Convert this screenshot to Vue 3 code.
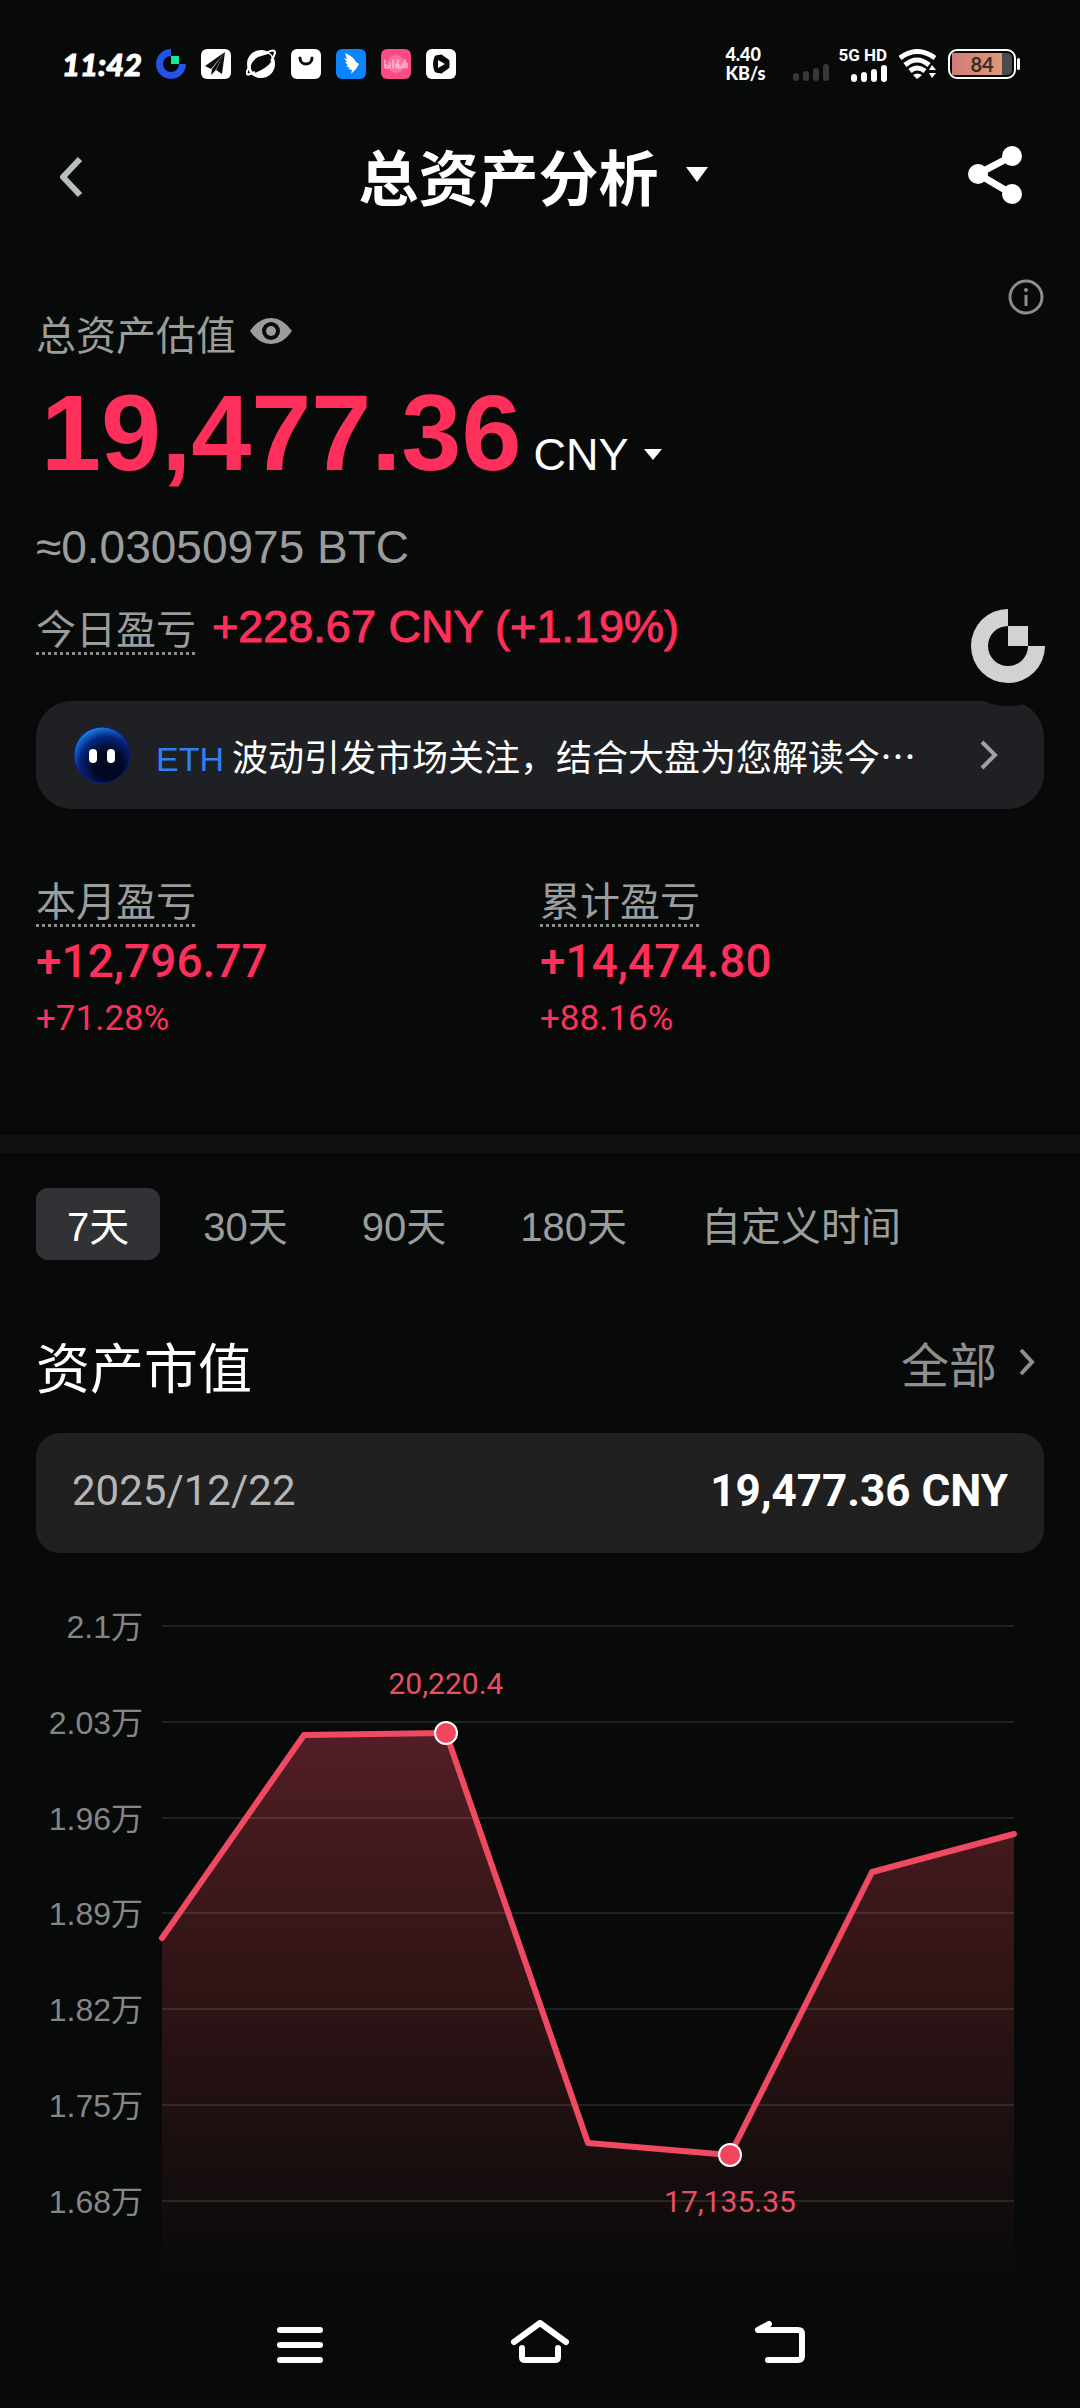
<script setup>
import { ref } from 'vue'

const ranges = ['7天', '30天', '90天', '180天', '自定义时间']
const activeRange = ref('7天')

const stats = [
  { label: '本月盈亏', value: '+12,796.77', percent: '+71.28%' },
  { label: '累计盈亏', value: '+14,474.80', percent: '+88.16%' },
]

const ticks = ['2.1万', '2.03万', '1.96万', '1.89万', '1.82万', '1.75万', '1.68万'].map(
  (label, i) => ({ label, y: Math.round(33 + i * 95.8) }),
)

const points = [
  [162, 345],
  [304, 142],
  [446, 140],
  [588, 550],
  [730, 562],
  [872, 279],
  [1014, 241],
]
const linePoints = points.map((p) => p.join(',')).join(' ')
const areaPoints = `162,680 ${linePoints} 1014,680`
const markers = [
  { x: 446, y: 140, label: '20,220.4', labelY: 101 },
  { x: 730, y: 562, label: '17,135.35', labelY: 619 },
]
</script>

<template>
  <div class="page">
    <div class="status">
      <div class="status-left">
        <span class="clock">11:42</span>
        <svg class="app" viewBox="0 0 30 30">
          <path d="M15 0A15 15 0 1 0 30 15H23A8 8 0 1 1 15 7Z" fill="#2354e6" />
          <rect x="15" y="7" width="8" height="8" fill="#17e6a1" />
        </svg>
        <svg class="app" viewBox="0 0 30 30">
          <rect width="30" height="30" rx="6" fill="#fff" />
          <path d="M24 3L4 17l6 3zM24 3L11 20l-1 6 4-4zM24 3l-9 18 6 4z" fill="#0a0c0b" />
        </svg>
        <svg class="app" viewBox="0 0 30 30">
          <circle cx="15" cy="15" r="14" fill="#fff" />
          <path d="M5 16Q6 12 12 8L22 5Q27 6 25 13Q21 19 9 24Q4 22 5 16Z" fill="#070a09" />
          <path d="M4 17C0 22-1 27 4 25Q7 24 9 23M20 4Q29-1 29 4Q28 8 25 12" fill="none" stroke="#fff" stroke-width="2" />
        </svg>
        <svg class="app" viewBox="0 0 30 30">
          <rect width="30" height="30" rx="6" fill="#fff" />
          <path d="M9 9C9 17 21 17 21 9" fill="none" stroke="#0a0c0b" stroke-width="3" stroke-linecap="round" />
        </svg>
        <svg class="app" viewBox="0 0 30 30">
          <rect width="30" height="30" rx="6" fill="#0a84ff" />
          <path d="M9 4c5 2 9 5 11 9l3 2-3 5-1 1-4 4 1-4-4-1 2-1-4-2 2-1-3-3h2l-3-4 3 1z" fill="#fff" />
        </svg>
        <svg class="app" viewBox="0 0 30 30">
          <rect width="30" height="30" rx="6" fill="#fb4b86" />
          <circle cx="15" cy="15" r="9" fill="#fd6f9d" />
          <path d="M4 11v8h3q1-3-3-3M9 14v5M12 11v8M15 14v5M17 11v8h3q1-3-3-3M22 14v5M24 11v8M26 14v5" fill="none" stroke="#ffe9f0" stroke-width="1" stroke-linecap="round" />
        </svg>
        <svg class="app" viewBox="0 0 30 30">
          <rect width="30" height="30" rx="6" fill="#fff" />
          <path d="M10 8l5-1 7 5v6l-7 5-5-1q-3-7 0-14z" fill="#0a0c0b" stroke="#0a0c0b" stroke-width="3" stroke-linejoin="round" />
          <path d="M12 11l7 4-7 4z" fill="#fff" />
        </svg>
      </div>
      <div class="status-right">
        <span class="speed">4.40<br />KB/s</span>
        <svg class="bars dim" viewBox="0 0 36 17">
          <rect y="9" width="6" height="8" rx="3" /><rect x="10" y="7" width="6" height="10" rx="3" />
          <rect x="20" y="4" width="6" height="13" rx="3" /><rect x="30" width="6" height="17" rx="3" />
        </svg>
        <span class="net">
          <span>5G HD</span>
          <svg class="bars" viewBox="0 0 36 17">
            <rect y="9" width="6" height="8" rx="3" /><rect x="10" y="7" width="6" height="10" rx="3" />
            <rect x="20" y="4" width="6" height="13" rx="3" /><rect x="30" width="6" height="17" rx="3" />
          </svg>
        </span>
        <svg class="wifi" viewBox="0 0 37 30">
          <g fill="none" stroke="#fff" stroke-width="5">
            <path d="M1 9Q18-4 36 9" /><path d="M6 16Q18 6 30 16" /><path d="M11 22Q18 16 26 22" />
          </g>
          <path d="M14 26q4-3 9 0l-5 4z" fill="#fff" />
          <path d="M29 23v-2l4-6 4 6v8h-8z" fill="#070a09" />
          <path d="M30 21l3-5 4 5zM30 24h7l-4 5z" fill="#fff" />
        </svg>
        <span class="battery"><span class="charge"></span><span class="level">84</span></span>
      </div>
    </div>

    <header class="header">
      <button class="icon-btn back" aria-label="返回">
        <svg width="28" height="44" viewBox="0 0 28 44"><path d="M24 4L7 22l17 18" fill="none" stroke="#b9bdbb" stroke-width="6" stroke-linejoin="round" /></svg>
      </button>
      <button class="title">
        <span>总资产分析</span>
        <svg width="24" height="16" viewBox="0 0 24 16"><path d="M1 0h22L12 15z" fill="#fff" /></svg>
      </button>
      <button class="icon-btn" aria-label="分享">
        <svg width="56" height="60" viewBox="0 0 56 60">
          <path d="M45 11L11 29l34 20" fill="none" stroke="#fff" stroke-width="7" />
          <circle cx="45" cy="11" r="10" fill="#fff" /><circle cx="11" cy="29" r="10" fill="#fff" /><circle cx="45" cy="49" r="10" fill="#fff" />
        </svg>
      </button>
    </header>

    <section class="summary">
      <div class="valuation">
        <span class="muted">总资产估值</span>
        <button class="icon-btn eye" aria-label="隐藏金额">
          <svg width="42" height="28" viewBox="0 0 42 28">
            <path d="M0 14Q9 1 21 1T42 14Q33 27 21 27T0 14Z" fill="#9a9d9c" />
            <circle cx="21" cy="14" r="9" fill="#070a09" /><circle cx="21" cy="14" r="5" fill="#9a9d9c" />
          </svg>
        </button>
        <button class="icon-btn info" aria-label="说明">
          <svg width="36" height="36" viewBox="0 0 36 36">
            <circle cx="18" cy="18" r="16" fill="none" stroke="#8b8e8d" stroke-width="3" />
            <path d="M18 16v11" stroke="#8b8e8d" stroke-width="3" /><circle cx="18" cy="11" r="2" fill="#8b8e8d" />
          </svg>
        </button>
      </div>
      <div class="amount">
        <strong>19,477.36</strong>
        <button class="currency">
          CNY
          <svg width="18" height="12" viewBox="0 0 18 12"><path d="M0 0h18L9 11z" fill="#fff" /></svg>
        </button>
      </div>
      <p class="btc">≈0.03050975 BTC</p>
      <p class="today"><span class="muted dotted">今日盈亏</span><span class="gain">+228.67 CNY (+1.19%)</span></p>

      <div class="insight-wrap">
        <a class="insight" href="#insight">
          <svg width="60" height="60" viewBox="0 0 60 60">
            <defs>
              <radialGradient id="face" cx="0.6" cy="0.68" r="0.72">
                <stop offset="0.35" stop-color="#020722" /><stop offset="0.7" stop-color="#04257c" /><stop offset="1" stop-color="#1f8cf5" />
              </radialGradient>
            </defs>
            <circle cx="30" cy="30" r="28" fill="url(#face)" stroke="#0b1a86" stroke-width="1" />
            <rect x="17" y="24" width="8" height="14" rx="4" fill="#fff" /><rect x="35" y="24" width="8" height="14" rx="4" fill="#fff" />
          </svg>
          <span class="insight-text"><span class="coin">ETH</span> 波动引发市场关注，结合大盘为您解读今⋯</span>
          <svg width="18" height="30" viewBox="0 0 18 30"><path d="M2 2l13 13L2 28" fill="none" stroke="#a0a1a3" stroke-width="4" /></svg>
        </a>
        <button class="float-logo" aria-label="Gate">
          <svg width="74" height="74" viewBox="0 0 74 74">
            <path d="M37 0A37 37 0 1 0 74 37H57A20 20 0 1 1 37 17Z" fill="#d0d3d1" /><rect x="37" y="17" width="20" height="20" fill="#d0d3d1" />
          </svg>
        </button>
      </div>

      <div class="stats">
        <div v-for="s in stats" :key="s.label" class="stat">
          <span class="muted dotted">{{ s.label }}</span>
          <span class="stat-value">{{ s.value }}</span>
          <span class="stat-percent">{{ s.percent }}</span>
        </div>
      </div>
    </section>

    <main class="analysis">
      <nav class="tabs">
        <button v-for="r in ranges" :key="r" :class="{ active: r === activeRange }" @click="activeRange = r">{{ r }}</button>
      </nav>
      <div class="section-head">
        <h2>资产市值</h2>
        <a href="#all">全部<svg width="16" height="28" viewBox="0 0 16 28"><path d="M2 2l11 12L2 26" fill="none" stroke="#8d908f" stroke-width="4" /></svg></a>
      </div>
      <div class="reading"><span>2025/12/22</span><strong>19,477.36 CNY</strong></div>
    </main>

    <svg class="chart" viewBox="0 0 1080 687">
      <defs>
        <linearGradient id="fill" gradientUnits="userSpaceOnUse" x1="0" y1="140" x2="0" y2="680">
          <stop offset="0" stop-color="#f04a62" stop-opacity="0.32" />
          <stop offset="0.5" stop-color="#e8414e" stop-opacity="0.17" />
          <stop offset="1" stop-color="#e8414e" stop-opacity="0.01" />
        </linearGradient>
      </defs>
      <polygon :points="areaPoints" fill="url(#fill)" />
      <g v-for="t in ticks" :key="t.label">
        <line x1="162" x2="1014" :y1="t.y" :y2="t.y" stroke="#fff" stroke-opacity="0.1" stroke-width="2" />
        <text class="tick" x="143" :y="t.y + 12">{{ t.label }}</text>
      </g>
      <polyline :points="linePoints" fill="none" stroke="#ef4a61" stroke-width="6" stroke-linecap="round" stroke-linejoin="round" />
      <g v-for="m in markers" :key="m.label">
        <circle :cx="m.x" :cy="m.y" r="11" fill="#f4455e" stroke="#fff" stroke-width="2" />
        <text class="mark" :x="m.x" :y="m.labelY">{{ m.label }}</text>
      </g>
    </svg>

    <footer class="sysnav">
      <button aria-label="最近任务">
        <svg width="60" height="48" viewBox="0 0 60 48"><path d="M10 10h40M10 25h40M10 40h40" /></svg>
      </button>
      <button aria-label="主屏幕">
        <svg width="60" height="48" viewBox="0 0 60 48"><path d="M4 22L30 3l26 19M12 28v9q0 3 3 3h30q3 0 3-3v-9" /></svg>
      </button>
      <button aria-label="返回上一级">
        <svg width="60" height="48" viewBox="0 0 60 48"><path d="M19 4L8 10h40q4 0 4 4v22q0 4-4 4H18" /></svg>
      </button>
    </footer>
  </div>
</template>

<style>
body {
  margin: 0;
  background: #070a09;
}
</style>

<style scoped>
.page {
  --num: 'Liberation Sans', 'Noto Sans CJK SC', sans-serif;
  --din: 'Roboto', 'Noto Sans CJK SC', sans-serif;
  min-height: 100vh;
  display: flex;
  flex-direction: column;
  background: #070a09;
  color: #fff;
  font-family: 'Noto Sans CJK SC', sans-serif;
  font-size: 40px;
}
.page * {
  box-sizing: border-box;
}
button {
  margin: 0;
  padding: 0;
  border: 0;
  background: none;
  color: inherit;
  font: inherit;
  cursor: pointer;
}
a {
  color: inherit;
  text-decoration: none;
}
p,
h2 {
  margin: 0;
}
svg {
  display: block;
  flex: none;
}

.status {
  height: 128px;
  padding: 0 60px 0 62px;
  display: flex;
  justify-content: space-between;
  align-items: center;
}
.status-left {
  display: flex;
  align-items: center;
  gap: 15px;
}
.clock {
  width: 79px;
  font: italic 900 31px/30px 'Lato', sans-serif;
  -webkit-text-stroke: 1px #fff;
}
.app {
  width: 30px;
  height: 30px;
}
.status-right {
  display: flex;
  align-items: center;
  gap: 12px;
}
.speed {
  width: 37px;
  margin-right: 19px;
  font: 900 18px/19px 'Lato', sans-serif;
}
.bars {
  width: 36px;
  height: 17px;
  fill: #fff;
}
.bars.dim {
  margin: 16px -3px 0 0;
  fill: #363837;
}
.net {
  display: flex;
  flex-direction: column;
  align-items: flex-end;
  gap: 2px;
  font: 700 17px/16px 'Roboto', sans-serif;
}
.wifi {
  width: 37px;
  height: 30px;
}
.battery {
  position: relative;
  width: 68px;
  height: 30px;
  margin-right: 4px;
  padding: 2px;
  border: 2px solid #fff;
  border-radius: 9px;
  background: linear-gradient(#4b4c50, #4b4c50) content-box;
}
.battery::after {
  content: '';
  position: absolute;
  right: -6px;
  top: 7px;
  width: 3px;
  height: 12px;
  border-radius: 2px;
  background: #fff;
}
.charge {
  display: block;
  width: 84%;
  height: 100%;
  background: linear-gradient(90deg, #d17c78, #dc9a76);
}
.level {
  position: absolute;
  inset: 0;
  text-align: center;
  color: #3b2b2b;
  font: 700 20px/26px 'Lato', sans-serif;
}

.header {
  height: 94px;
  padding: 0 57px 0 44px;
  display: grid;
  grid-template-columns: 1fr auto 1fr;
  align-items: center;
}
.header > :last-child {
  justify-self: end;
}
.back {
  justify-self: start;
  padding: 4px 0 0 12px;
}
.title {
  display: flex;
  align-items: center;
  gap: 26px;
  font-size: 60px;
  font-weight: 700;
  line-height: 84px;
}
.icon-btn {
  display: flex;
}

.summary {
  padding: 57px 36px 0;
}
.muted {
  color: #9a9d9c;
}
.valuation {
  height: 82px;
  display: flex;
  align-items: flex-end;
  gap: 14px;
  line-height: 56px;
}
.eye {
  margin-bottom: 16px;
}
.info {
  margin-left: auto;
  align-self: flex-start;
}
.amount {
  height: 142px;
  padding-left: 5px;
  display: flex;
  align-items: baseline;
  gap: 12px;
  font-family: var(--num);
}
.amount strong {
  color: #ff2f5b;
  font-size: 108px;
  line-height: 144px;
  font-weight: 700;
}
.currency {
  display: flex;
  align-items: center;
  gap: 16px;
  font-size: 45px;
}
.btc {
  margin-top: 16px;
  color: #9a9d9c;
  font: 400 46px/56px var(--num);
}
.today {
  margin-top: 24px;
  display: flex;
  align-items: center;
  gap: 16px;
  line-height: 56px;
}
.dotted {
  line-height: 56px;
  background: repeating-linear-gradient(90deg, #8b8e8d 0 3px, transparent 3px 6px) bottom left / 100% 3px no-repeat;
}
.gain {
  color: #ff2f5b;
  font: 400 45px/56px var(--num);
  -webkit-text-stroke: 1px #ff2f5b;
}

.insight-wrap {
  position: relative;
  margin-top: 46px;
}
.insight {
  height: 108px;
  padding: 0 46px 0 36px;
  display: flex;
  align-items: center;
  border-radius: 36px;
  background: #1f2023;
  font-size: 36px;
}
.insight-text {
  flex: 1;
  min-width: 0;
  margin-left: 24px;
  white-space: nowrap;
  overflow: hidden;
}
.coin {
  color: #3080f0;
  font-family: var(--num);
  font-size: 34px;
}
.float-logo {
  position: absolute;
  right: -24px;
  top: -115px;
  width: 120px;
  height: 120px;
  display: grid;
  place-items: center;
  border-radius: 50%;
  background: #070a09;
}
.stats {
  margin-top: 62px;
  display: grid;
  grid-template-columns: 1fr 1fr;
}
.stat {
  display: flex;
  flex-direction: column;
  align-items: flex-start;
  color: #ff2f5b;
  font-family: var(--din);
}
.stat .dotted {
  font-family: 'Noto Sans CJK SC', sans-serif;
}
.stat-value {
  margin-top: 6px;
  font-size: 46px;
  font-weight: 500;
  line-height: 56px;
}
.stat-percent {
  margin-top: 2px;
  font-size: 35px;
  line-height: 56px;
}

.analysis {
  margin-top: 88px;
  padding: 35px 36px 0;
  border-top: 18px solid #101010;
}
.tabs {
  display: flex;
  gap: 12px;
  color: #9a9d9c;
  font-family: var(--num);
}
.tabs button {
  height: 72px;
  padding: 0 31px;
  border-radius: 12px;
}
.tabs .active {
  background: #313235;
  color: #fff;
}
.section-head {
  height: 173px;
  padding-top: 38px;
  display: flex;
  justify-content: space-between;
  align-items: center;
}
h2 {
  font-size: 54px;
  font-weight: 400;
}
.section-head a {
  padding: 0 9px 8px 0;
  display: flex;
  align-items: center;
  gap: 22px;
  color: #8d908f;
  font-size: 48px;
}
.reading {
  height: 120px;
  padding: 0 36px 4px;
  display: flex;
  justify-content: space-between;
  align-items: center;
  border-radius: 24px;
  background: #202020;
  font: 400 44px/56px var(--din);
}
.reading span {
  color: #b5b6b6;
  font-size: 42px;
}
.chart {
  width: 100%;
  height: auto;
  margin-top: 40px;
}
.tick {
  fill: #858786;
  font: 400 32px var(--num);
  text-anchor: end;
}
.mark {
  fill: #e85066;
  font: 400 30px var(--din);
  text-anchor: middle;
}
.sysnav {
  flex: 1;
  min-height: 128px;
  padding: 0 180px;
  display: grid;
  grid-template-columns: repeat(3, 1fr);
  place-items: center;
}
.sysnav path {
  fill: none;
  stroke: #fff;
  stroke-width: 6px;
  stroke-linecap: round;
  stroke-linejoin: round;
}
</style>
